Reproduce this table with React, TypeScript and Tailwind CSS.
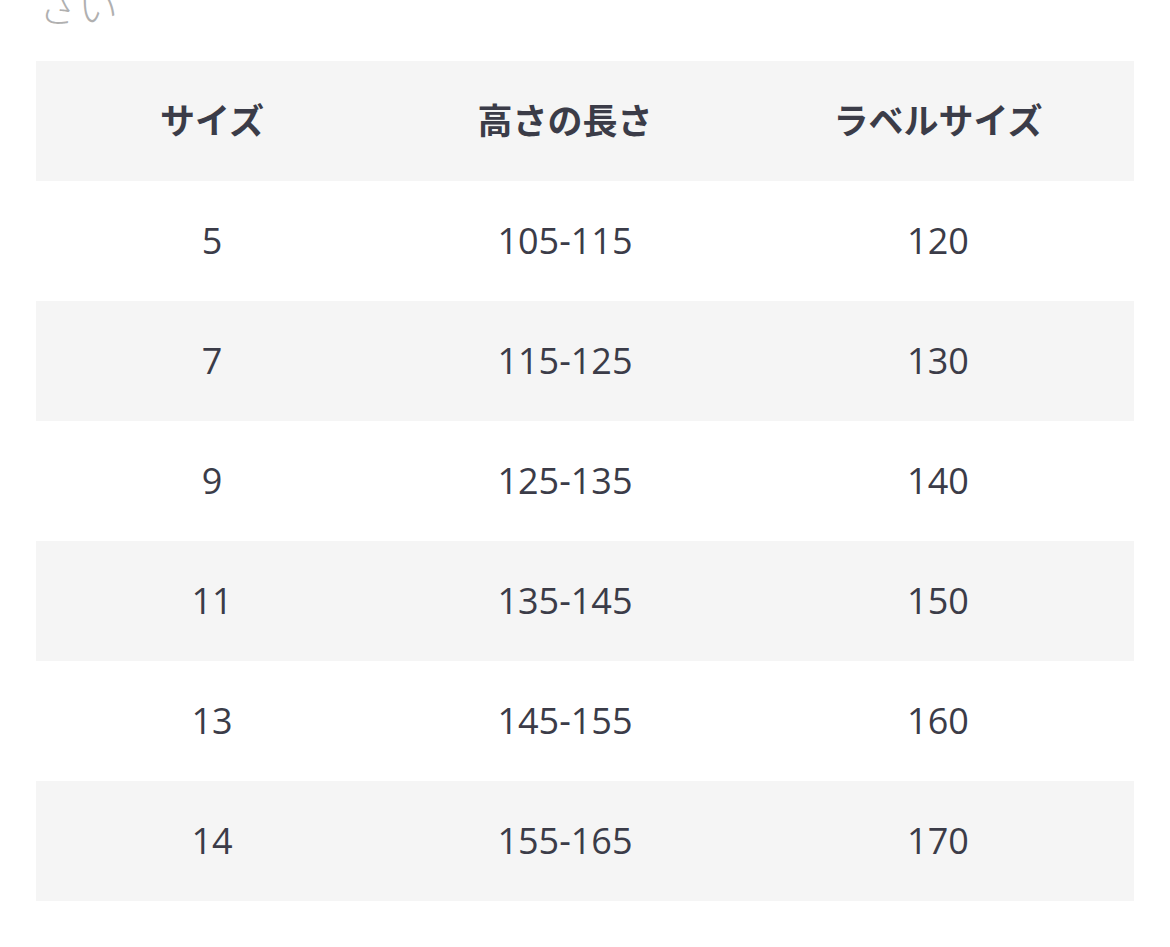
import React from "react";

const rows = [
  { size: "5", height: "105-115", label: "120" },
  { size: "7", height: "115-125", label: "130" },
  { size: "9", height: "125-135", label: "140" },
  { size: "11", height: "135-145", label: "150" },
  { size: "13", height: "145-155", label: "160" },
  { size: "14", height: "155-165", label: "170" },
];

const cols = "grid grid-cols-[352px_354px_392px] items-center h-[120px]";

export default function App() {
  return (
    <div className="w-[1170px] h-[947px] bg-white overflow-hidden">
      <div className="h-[61px] overflow-hidden pl-[38px]">
        <p className="-mt-[15px] text-[40px] leading-none text-[#b0b0b0] font-light [font-family:'Noto_Sans_CJK_JP',sans-serif]">
          さい
        </p>
      </div>
      <div className="mx-[36px] w-[1098px] text-[#3b3c48]">
        <div className={`${cols} bg-[#f5f5f5] text-[35px] font-bold [font-family:'Noto_Sans_CJK_JP',sans-serif]`}>
          <div className="text-center -mt-[3px]">サイズ</div>
          <div className="text-center -mt-[3px]">高さの長さ</div>
          <div className="text-center -mt-[3px]">ラベルサイズ</div>
        </div>
        {rows.map((row, i) => (
          <div
            key={i}
            className={`${cols} ${i % 2 === 1 ? "bg-[#f5f5f5]" : "bg-white"} text-[36px] [font-family:'Open_Sans',sans-serif]`}
          >
            <div className="text-center">{row.size}</div>
            <div className="text-center">{row.height}</div>
            <div className="text-center">{row.label}</div>
          </div>
        ))}
      </div>
    </div>
  );
}
